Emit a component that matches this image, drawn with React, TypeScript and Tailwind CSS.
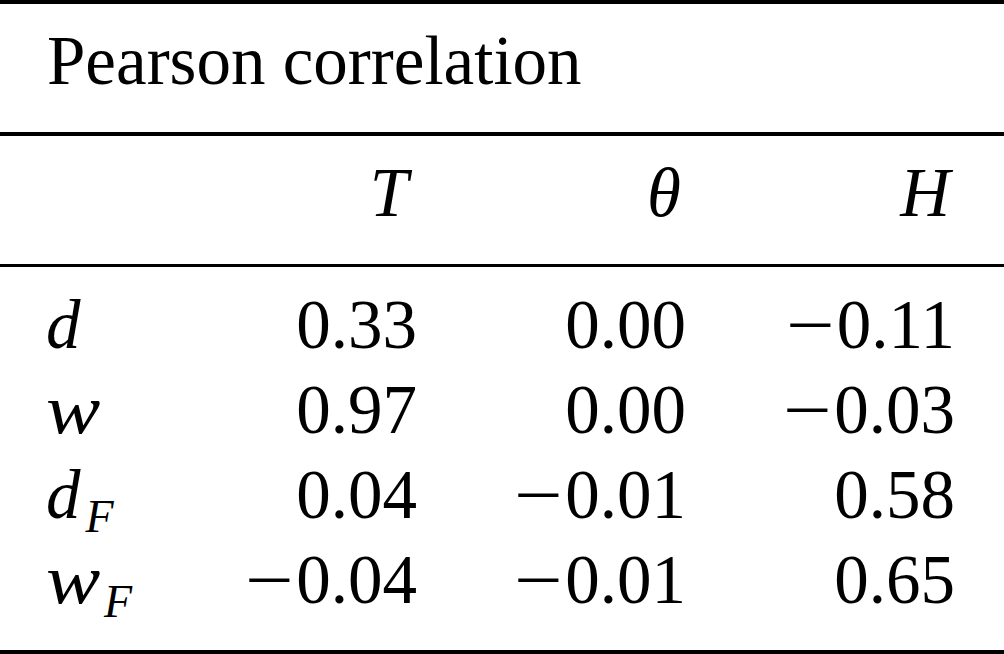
import React from "react";

const rows: { label: string; sub?: string; vals: string[] }[] = [
  { label: "d", vals: ["0.33", "0.00", "-0.11"] },
  { label: "w", vals: ["0.97", "0.00", "-0.03"] },
  { label: "d", sub: "F", vals: ["0.04", "-0.01", "0.58"] },
  { label: "w", sub: "F", vals: ["-0.04", "-0.01", "0.65"] },
];

function Num({ v }: { v: string }) {
  if (v.startsWith("-")) {
    return (
      <span>
        <span className="inline-block ml-[9px] mr-[2px] scale-x-[1.25] origin-right">{"\u2212"}</span>
        {v.slice(1)}
      </span>
    );
  }
  return <span>{v}</span>;
}

export default function App() {
  return (
    <div
      className="w-[1004px] h-[654px] bg-white text-black overflow-hidden flex flex-col"
      style={{ fontFamily: '"Liberation Serif", "Times New Roman", serif' }}
    >
      <div className="h-[3.5px] bg-black shrink-0" />
      <div className="pt-[15px] pb-[28.5px] pl-[47px] text-[69px] leading-[85px] shrink-0 whitespace-nowrap">
        Pearson correlation
      </div>
      <div className="h-[3.5px] bg-black shrink-0" />
      <div className="pt-[15px] pb-[28px] grid grid-cols-[200px_217px_269px_269px_1fr] text-[69px] leading-[85px] italic shrink-0">
        <div />
        <div className="text-right pr-[9px]">T</div>
        <div className="text-right pr-[5px]">θ</div>
        <div className="text-right pr-[5px]">H</div>
        <div />
      </div>
      <div className="h-[3.5px] bg-black shrink-0" />
      <div className="pt-[16px] pb-[27px] flex flex-col shrink-0">
        {rows.map((r, i) => (
          <div
            key={i}
            className="grid grid-cols-[200px_217px_269px_269px_1fr] text-[69px] leading-[85px] h-[85px]"
          >
            <div className="pl-[46px] italic whitespace-nowrap">
              {r.label === "w" ? (
                <span className="inline-block scale-x-[1.18] origin-left mr-[8px]">w</span>
              ) : (
                <span className="mr-[1px]">d</span>
              )}
              {r.sub && (
                <span className="text-[46px] relative top-[14px] ml-[4px]">{r.sub}</span>
              )}
            </div>
            {r.vals.map((v, j) => (
              <div key={j} className="text-right whitespace-nowrap">
                <Num v={v} />
              </div>
            ))}
            <div />
          </div>
        ))}
      </div>
      <div className="h-[4px] bg-black shrink-0" />
    </div>
  );
}
